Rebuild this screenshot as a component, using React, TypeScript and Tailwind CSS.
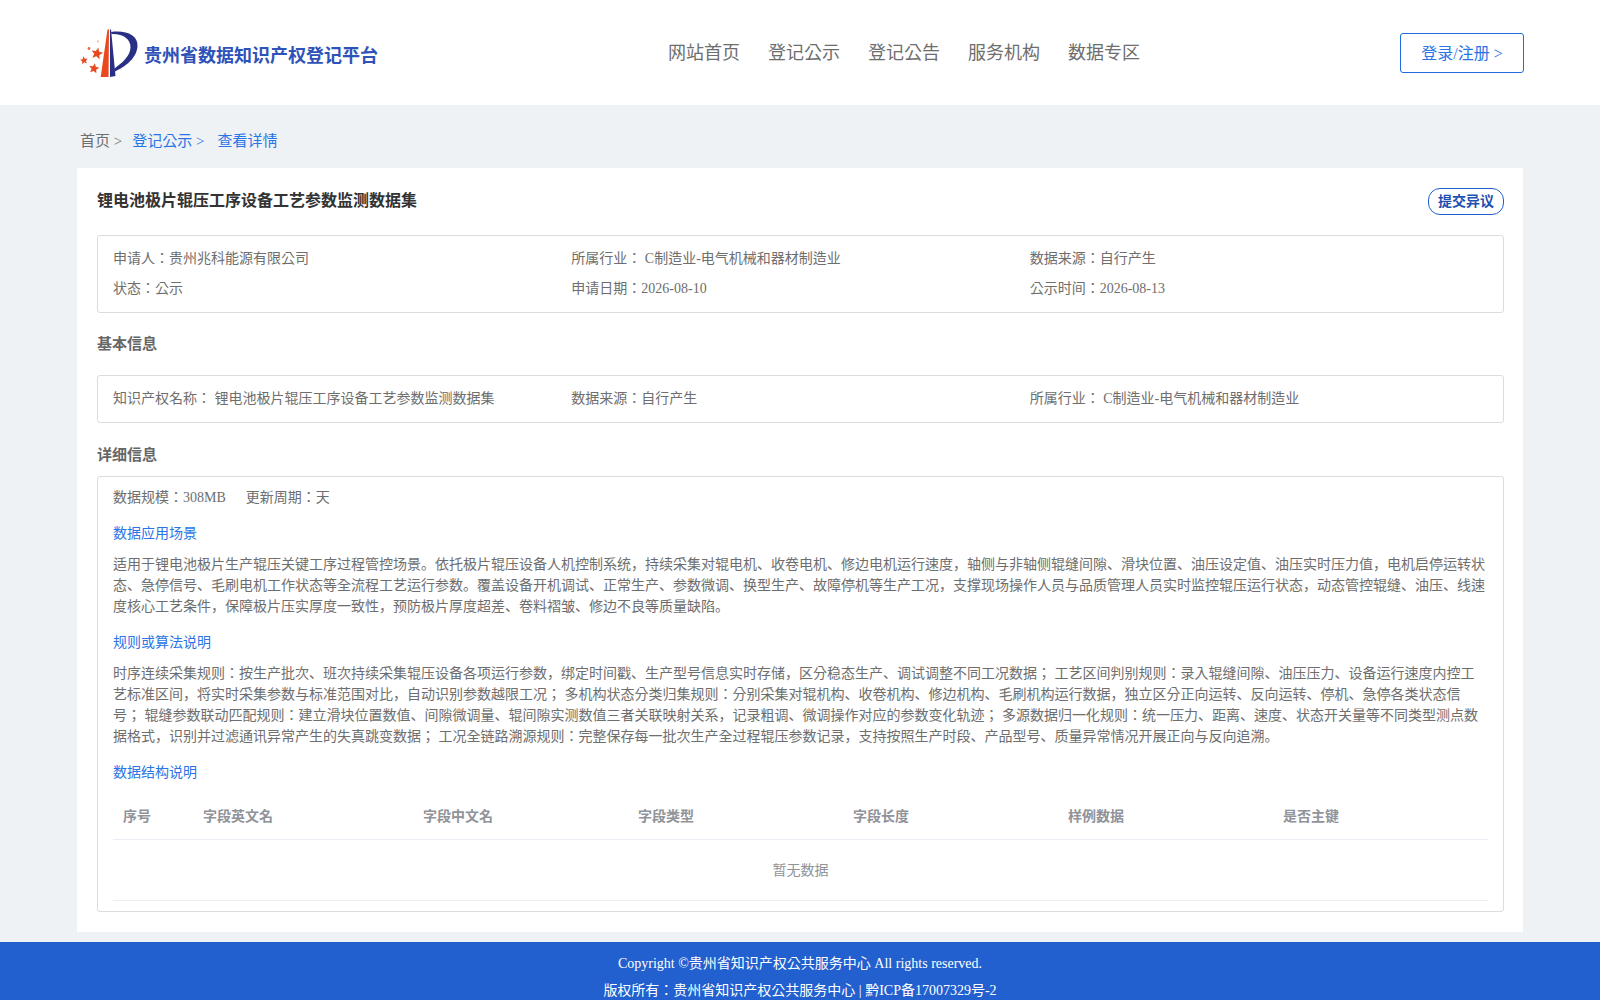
const navItems = ['网站首页', '登记公示', '登记公告', '服务机构', '数据专区'];
const columns = [
  { label: '序号', width: 'w-[80px]' },
  { label: '字段英文名', width: 'w-[220px]' },
  { label: '字段中文名', width: 'w-[215px]' },
  { label: '字段类型', width: 'w-[215px]' },
  { label: '字段长度', width: 'w-[215px]' },
  { label: '样例数据', width: 'w-[215px]' },
  { label: '是否主键', width: 'w-[215px]' },
];

// five pointed star, tilted a little like the emblem
function star(cx: number, cy: number, r: number, tilt: number) {
  const pts: string[] = [];
  for (let i = 0; i < 10; i++) {
    const radius = i % 2 === 0 ? r : r * 0.45;
    const a = ((-90 + tilt + i * 36) * Math.PI) / 180;
    pts.push(`${(cx + radius * Math.cos(a)).toFixed(2)},${(cy + radius * Math.sin(a)).toFixed(2)}`);
  }
  return pts.join(' ');
}

function Logo() {
  return (
    <svg width="60" height="52" viewBox="0 0 60 52" className="shrink-0">
      <polygon fill="#e8491d" points="27.500,2.500 29,2.500 28.500,50 20.700,50" />
      <polygon fill="#2a2f86" points="30,2.500 31,2.500 35.500,49 30,50" />
      <path fill="#2a2f86" d="M31 5C46 3 58 8 57.500 19C57 31 45 40 35 44.500L34.500 41.500C42 36 50.500 29 50.500 20C50.500 12 43 6.500 31.500 7Z" />
      <polygon fill="#e8491d" points={star(17, 26.5, 6.2, 12)} />
      <polygon fill="#e8491d" points={star(4, 33.5, 4.2, -8)} />
      <polygon fill="#e8491d" points={star(14, 41.5, 5.4, 10)} />
      <circle fill="#ec6a45" cx="9" cy="21.500" r="1.400" />
      <circle fill="#f2a58c" cx="18" cy="14.500" r="0.900" />
    </svg>
  );
}

export default function App() {
  return (
    <div className="h-screen overflow-hidden bg-[#eef2f5] font-['Liberation_Serif','Noto_Sans_CJK_KR',serif] text-[14px] leading-[21px] text-[#6e6e6e]">
      <header className="flex h-[105px] items-center bg-white pl-[80px] pr-[76px]">
        <div className="flex w-[588px] items-center">
          <Logo />
          <span className="ml-[4px] mt-[7px] text-[18px] font-bold text-[#2f52b8]">贵州省数据知识产权登记平台</span>
        </div>
        <nav className="mt-[2px] flex gap-[28px] text-[18px] leading-[27px]">
          {navItems.map((item) => (
            <span key={item}>{item}</span>
          ))}
        </nav>
        <button className="ml-auto h-[40px] w-[124px] rounded-[3px] border border-[#1e6ce0] pt-[1px] text-[16px] text-[#2a75e6]">
          登录/注册 &gt;
        </button>
      </header>

      <main className="mx-[77px]">
        <div className="flex h-[63px] items-center pl-[3px] pt-[10px] text-[15px]">
          <span>首页 &gt;</span>
          <span className="ml-[10px] text-[#2a75e6]">登记公示 &gt;</span>
          <span className="ml-[13px] text-[#2a75e6]">查看详情</span>
        </div>

        <div className="flex h-[764px] flex-col bg-white pl-[20px] pr-[19px] pt-[20px]">
          <div className="flex justify-between">
            <h1 className="mt-[1px] text-[16px] font-bold leading-[24px] text-[#333]">锂电池极片辊压工序设备工艺参数监测数据集</h1>
            <button className="h-[27px] w-[76px] rounded-[12px] border border-[#1e5fcf] text-[14px] font-bold text-[#1e50b0]">提交异议</button>
          </div>

          <div className="mt-[20px] grid h-[78px] grid-cols-3 content-center gap-y-[9px] rounded-[3px] border border-[#dcdcdc] px-[15px] pb-[2px]">
            <span>申请人：贵州兆科能源有限公司</span>
            <span>所属行业： C制造业-电气机械和器材制造业</span>
            <span>数据来源：自行产生</span>
            <span>状态：公示</span>
            <span>申请日期：2026-08-10</span>
            <span>公示时间：2026-08-13</span>
          </div>

          <h2 className="mt-[20px] text-[15px] font-bold leading-[22px] text-[#666]">基本信息</h2>

          <div className="mt-[20px] grid h-[48px] grid-cols-3 items-center rounded-[3px] border border-[#dcdcdc] px-[15px] pb-[2px]">
            <span>知识产权名称： 锂电池极片辊压工序设备工艺参数监测数据集</span>
            <span>数据来源：自行产生</span>
            <span>所属行业： C制造业-电气机械和器材制造业</span>
          </div>

          <h2 className="mt-[21px] text-[15px] font-bold leading-[22px] text-[#666]">详细信息</h2>

          <div className="mt-[10px] h-[436px] rounded-[3px] border border-[#dcdcdc] px-[15px] pt-[10px]">
            <div className="flex gap-[20px]">
              <span>数据规模：308MB</span>
              <span>更新周期：天</span>
            </div>

            <h3 className="mt-[15px] text-[#2a75e6]">数据应用场景</h3>
            <p className="mt-[10px]">
              适用于锂电池极片生产辊压关键工序过程管控场景。依托极片辊压设备人机控制系统，持续采集对辊电机、收卷电机、修边电机运行速度，轴侧与非轴侧辊缝间隙、滑块位置、油压设定值、油压实时压力值，电机启停运转状态、急停信号、毛刷电机工作状态等全流程工艺运行参数。覆盖设备开机调试、正常生产、参数微调、换型生产、故障停机等生产工况，支撑现场操作人员与品质管理人员实时监控辊压运行状态，动态管控辊缝、油压、线速度核心工艺条件，保障极片压实厚度一致性，预防极片厚度超差、卷料褶皱、修边不良等质量缺陷。
            </p>

            <h3 className="mt-[15px] text-[#2a75e6]">规则或算法说明</h3>
            <p className="mt-[10px]">
              时序连续采集规则：按生产批次、班次持续采集辊压设备各项运行参数，绑定时间戳、生产型号信息实时存储，区分稳态生产、调试调整不同工况数据； 工艺区间判别规则：录入辊缝间隙、油压压力、设备运行速度内控工艺标准区间，将实时采集参数与标准范围对比，自动识别参数越限工况； 多机构状态分类归集规则：分别采集对辊机构、收卷机构、修边机构、毛刷机构运行数据，独立区分正向运转、反向运转、停机、急停各类状态信号； 辊缝参数联动匹配规则：建立滑块位置数值、间隙微调量、辊间隙实测数值三者关联映射关系，记录粗调、微调操作对应的参数变化轨迹； 多源数据归一化规则：统一压力、距离、速度、状态开关量等不同类型测点数据格式，识别并过滤通讯异常产生的失真跳变数据； 工况全链路溯源规则：完整保存每一批次生产全过程辊压参数记录，支持按照生产时段、产品型号、质量异常情况开展正向与反向追溯。
            </p>

            <h3 className="mt-[15px] text-[#2a75e6]">数据结构说明</h3>

            <div className="mt-[9px] flex h-[48px] items-center border-b border-[#ebeef5] pt-[2px] font-bold text-[#909399]">
              {columns.map((col) => (
                <span key={col.label} className={`${col.width} pl-[10px]`}>{col.label}</span>
              ))}
            </div>
            <div className="flex h-[61px] items-center justify-center border-b border-[#ebeef5] text-[#909399]">暂无数据</div>
          </div>
        </div>
      </main>

      <footer className="mt-[10px] h-[58px] overflow-hidden bg-[#2160ce] pt-[9px] text-center leading-[26px] text-white">
        <div>Copyright ©贵州省知识产权公共服务中心 All rights reserved.</div>
        <div className="mt-[1px]">版权所有：贵州省知识产权公共服务中心 | 黔ICP备17007329号-2</div>
      </footer>
    </div>
  );
}
